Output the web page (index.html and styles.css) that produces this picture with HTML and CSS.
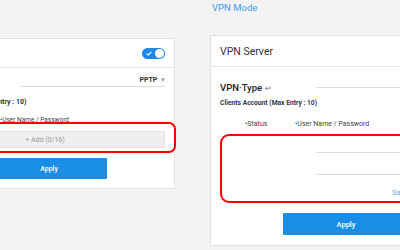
FILE: index.html
```html
<!DOCTYPE html>
<html lang="en">
<head>
    <meta charset="UTF-8">
    <meta name="viewport" content="width=device-width, initial-scale=1.0">
    <title>VPN Mode</title>
    <link rel="stylesheet" href="styles.css">
</head>
<body>
    <div class="page">
        <div class="mode-title">VPN Mode</div>

        <div class="cards">
            <!-- VPN client card -->
            <section class="card card-client">
                <header class="card-head">
                    <h2 class="card-title">VPN Client</h2>
                    <span class="switch">
                        <svg class="switch-check" width="6" height="5" viewBox="0 0 6 5">
                            <path d="M0.6 2.6 L2.3 4 L5.4 0.8" fill="none" stroke="#fff" stroke-width="1.1"/>
                        </svg>
                        <span class="switch-knob"></span>
                    </span>
                </header>
                <div class="card-body">
                    <div class="field-row">
                        <span class="field-label">VPN Type</span>
                        <div class="select">PPTP <span class="caret">&#9662;</span></div>
                    </div>
                    <p class="section-label">Clients Account (Max Entry : 10)</p>
                    <div class="list-head">
                        <span class="col-status">&bull;Status</span>
                        <span class="col-user">&bull;User Name / Password</span>
                    </div>
                    <div class="highlight">
                        <div class="add-row">+ Add (0/16)</div>
                    </div>
                    <button class="apply">Apply</button>
                </div>
            </section>

            <!-- VPN server card -->
            <section class="card card-server">
                <header class="card-head">
                    <h2 class="card-title">VPN Server</h2>
                </header>
                <div class="card-body">
                    <div class="field-row">
                        <span class="field-label">VPN&middot;Type <span class="mark">&#8629;</span></span>
                        <div class="select"></div>
                    </div>
                    <p class="section-label">Clients Account (Max Entry : 10)</p>
                    <div class="list-head">
                        <span class="col-status">&bull;Status</span>
                        <span class="col-user">&bull;User Name / Password</span>
                    </div>
                    <div class="highlight">
                        <div class="entry">
                            <div class="entry-input"></div>
                            <div class="entry-input"></div>
                        </div>
                        <div class="entry-actions"><a class="save-link">Save</a></div>
                    </div>
                    <button class="apply">Apply</button>
                </div>
            </section>
        </div>
    </div>
</body>
</html>
```

FILE: styles.css
```css
/* VPN mode page */
body {
    font-family: Roboto, "Liberation Sans", Arial, sans-serif;
    margin: 0;
    padding: 0;
    background-color: #f3f3f3;
    color: #333;
    overflow: hidden;
}

.page {
    width: 400px;
    height: 250px;
    overflow: hidden;
}

.mode-title {
    padding-left: 212px;
    font-size: 9.5px;
    line-height: 15px;
    color: #3f99e8;
}

.cards {
    display: flex;
    align-items: flex-start;
    gap: 35px;
    margin-top: 20px;
}

.card {
    flex: none;
    background: #fff;
    border: 1px solid #e2e2e2;
    box-sizing: border-box;
}

.card-client {
    width: 260px;
    margin-left: -85px;
    margin-top: 3px;
}

.card-server {
    width: 270px;
}

.card-head {
    display: flex;
    align-items: center;
    justify-content: space-between;
    padding: 0 9px 0 9px;
    border-bottom: 1px solid #e6e6e6;
}

.card-client .card-head {
    height: 28px;
}

.card-server .card-head {
    height: 30px;
}

.card-title {
    margin: 0;
    font-size: 10.5px;
    font-weight: normal;
    color: #333;
}

.switch {
    display: flex;
    align-items: center;
    justify-content: space-between;
    width: 23px;
    height: 11px;
    padding: 0 1px 0 4px;
    box-sizing: border-box;
    border-radius: 6px;
    background: #1e88e5;
}

.switch-knob {
    width: 9px;
    height: 9px;
    border-radius: 50%;
    background: #fff;
}

.card-body {
    padding: 0 9px;
}

.card-client .card-body {
    padding-top: 7px;
    padding-bottom: 9px;
}

.card-server .card-body {
    padding-top: 14px;
    padding-bottom: 10px;
}

.field-row {
    display: flex;
    align-items: center;
    height: 12px;
}

.field-label {
    width: 96px;
    font-size: 9.5px;
    font-weight: 500;
    color: #222;
}

.mark {
    font-size: 7.5px;
    color: #777;
}

.select {
    flex: 1;
    border-bottom: 1px solid #dcdcdc;
    text-align: right;
    font-size: 7px;
    font-weight: bold;
    color: #333;
}

.card-client .select {
    align-self: flex-end;
    padding-bottom: 2px;
}

.caret {
    color: #aaa;
    font-size: 7px;
    margin-left: 2px;
}

.section-label {
    margin: 0;
    font-size: 6.7px;
    font-weight: bold;
    line-height: 10px;
    color: #2c3a4e;
}

.card-client .section-label {
    margin-top: 10px;
    font-size: 7px;
}

.card-server .section-label {
    margin-top: 5px;
}

.list-head {
    display: flex;
    font-size: 7px;
    line-height: 8px;
    color: #444;
}

.card-client .list-head {
    margin-top: 9px;
    font-size: 6.5px;
}

.card-server .list-head {
    margin-top: 12px;
}

.col-status {
    width: 50px;
    margin-left: 25px;
}

.highlight {
    border: 2px solid #f00;
    border-radius: 7px;
}

.card-client .highlight {
    margin: -2px -11px 0 -11px;
    padding: 7px 9px 3px;
}

.card-server .highlight {
    margin: 6px -20px 0 0;
    padding: 0 9px 0 94px;
    border-radius: 9px;
}

.add-row {
    height: 17px;
    line-height: 17px;
    background: #efefef;
    border: 1px solid #e4e4e4;
    box-sizing: border-box;
    text-align: center;
    font-size: 7px;
    color: #9a9a9a;
}

.entry {
    display: flex;
    flex-direction: column;
    gap: 5px;
}

.entry-input {
    height: 16px;
    border-bottom: 1px solid #dcdcdc;
}

.entry-actions {
    margin-top: 13px;
    height: 10px;
    line-height: 10px;
    padding-bottom: 3px;
    padding-left: 76px;
    font-size: 7.5px;
}

.save-link {
    color: #6aa8e4;
}

.apply {
    display: block;
    margin-top: 5px;
    padding: 0;
    height: 21px;
    width: 116px;
    border: none;
    border-radius: 1px;
    background: #1a8de6;
    color: #fff;
    font-family: inherit;
    font-size: 7px;
    font-weight: 500;
}

.card-client .apply {
    margin-left: 66px;
}

.card-server .apply {
    margin-top: 10px;
    margin-left: 63px;
    width: 126px;
    height: 22px;
    font-size: 7.5px;
}
```
